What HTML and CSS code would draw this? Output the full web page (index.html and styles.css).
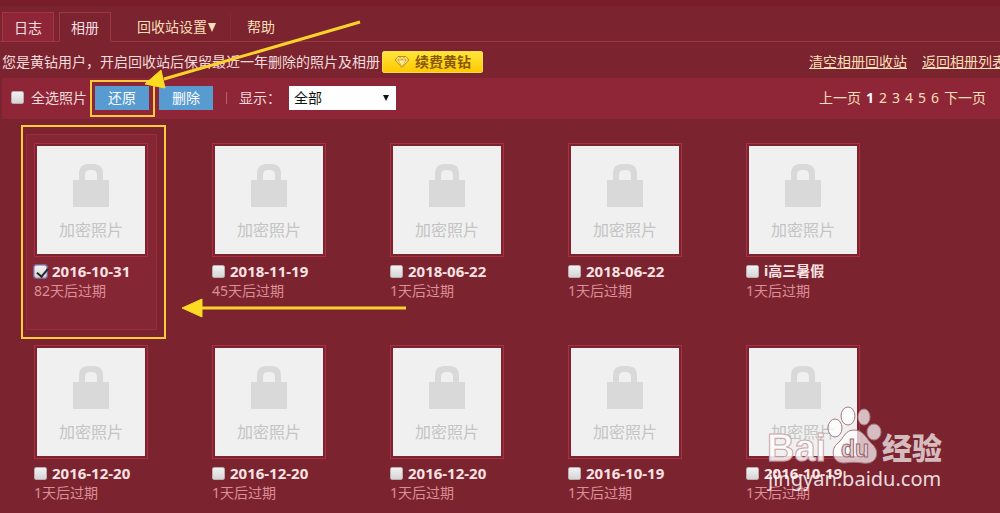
FILE: index.html
```html
<!DOCTYPE html>
<html lang="zh-CN">
<head>
<meta charset="utf-8">
<title>相册回收站</title>
<link rel="stylesheet" href="styles.css">
</head>
<body>
<svg class="defs" width="0" height="0" aria-hidden="true">
  <symbol id="lock" viewBox="0 0 36 43"><path fill="#d9d9d9" d="M0 16h6V10Q6 0 15 0h6q9 0 9 10v6h6v27H0zM12 16h12v-5q0-5-5-5h-2q-5 0-5 5z"/></symbol>
</svg>
<nav class="tabs">
  <a class="tab" href="#log">日志</a>
  <a class="tab tab-active" href="#album">相册</a>
  <a class="menu-link menu-settings" href="#settings">回收站设置<svg class="caret" width="8" height="9" viewBox="0 0 8 9" aria-hidden="true"><path d="M0 0h8L4 9z" fill="#f9dfb5"/></svg></a>
  <a class="menu-link" href="#help">帮助</a>
</nav>
<div class="notice">
  <span class="notice-text">您是黄钻用户，开启回收站后保留最近一年删除的照片及相册</span>
  <button class="renew" type="button">
    <svg width="16" height="14" viewBox="0 0 16 14" aria-hidden="true"><path d="M4 1.500h8l3 3.500-7 7.500L1 5z" fill="#fff0a0" stroke="#c98a10"/><path d="M1 5h14M4 5l4 7 4-7M4 5l2-3 2 3 2-3 2 3" fill="none" stroke="#d59a1c" stroke-width=".8"/></svg>
    续费黄钻
  </button>
  <span class="notice-links"><a href="#clear">清空相册回收站</a><a href="#back">返回相册列表</a></span>
</div>
<div class="toolbar">
  <label class="select-all"><input class="check" type="checkbox"> 全选照片</label>
  <div class="actions">
    <span class="marked"><button class="action" type="button">还原</button></span>
    <button class="action" type="button">删除</button>
  </div>
  <label class="filter"><span class="filter-label">显示：</span>
    <span class="select-wrap"><select class="select"><option>全部</option></select></span>
  </label>
  <div class="pager"><a href="#prev">上一页</a><b>1</b><a href="#p2">2</a><a href="#p3">3</a><a href="#p4">4</a><a href="#p5">5</a><a href="#p6">6</a><a href="#next">下一页</a></div>
</div>
<main class="albums">
  <article class="album album-selected">
    <div class="cover"><svg class="lock"><use href="#lock"/></svg><span>加密照片</span></div>
    <label class="name"><input class="check" type="checkbox" checked>2016-10-31</label>
    <p class="expiry">82天后过期</p>
  </article>
  <article class="album">
    <div class="cover"><svg class="lock"><use href="#lock"/></svg><span>加密照片</span></div>
    <label class="name"><input class="check" type="checkbox">2018-11-19</label>
    <p class="expiry">45天后过期</p>
  </article>
  <article class="album">
    <div class="cover"><svg class="lock"><use href="#lock"/></svg><span>加密照片</span></div>
    <label class="name"><input class="check" type="checkbox">2018-06-22</label>
    <p class="expiry">1天后过期</p>
  </article>
  <article class="album">
    <div class="cover"><svg class="lock"><use href="#lock"/></svg><span>加密照片</span></div>
    <label class="name"><input class="check" type="checkbox">2018-06-22</label>
    <p class="expiry">1天后过期</p>
  </article>
  <article class="album">
    <div class="cover"><svg class="lock"><use href="#lock"/></svg><span>加密照片</span></div>
    <label class="name name-text"><input class="check" type="checkbox">i高三暑假</label>
    <p class="expiry">1天后过期</p>
  </article>
  <article class="album">
    <div class="cover"><svg class="lock"><use href="#lock"/></svg><span>加密照片</span></div>
    <label class="name"><input class="check" type="checkbox">2016-12-20</label>
    <p class="expiry">1天后过期</p>
  </article>
  <article class="album">
    <div class="cover"><svg class="lock"><use href="#lock"/></svg><span>加密照片</span></div>
    <label class="name"><input class="check" type="checkbox">2016-12-20</label>
    <p class="expiry">1天后过期</p>
  </article>
  <article class="album">
    <div class="cover"><svg class="lock"><use href="#lock"/></svg><span>加密照片</span></div>
    <label class="name"><input class="check" type="checkbox">2016-12-20</label>
    <p class="expiry">1天后过期</p>
  </article>
  <article class="album">
    <div class="cover"><svg class="lock"><use href="#lock"/></svg><span>加密照片</span></div>
    <label class="name"><input class="check" type="checkbox">2016-10-19</label>
    <p class="expiry">1天后过期</p>
  </article>
  <article class="album">
    <div class="cover"><svg class="lock"><use href="#lock"/></svg><span>加密照片</span></div>
    <label class="name"><input class="check" type="checkbox">2016-10-19</label>
    <p class="expiry">1天后过期</p>
  </article>
</main>
<svg class="overlay" width="1000" height="513" viewBox="0 0 1000 513">
  <g fill="#fbdc20" stroke="#fbd22c">
    <path d="M360 22 164 79" stroke-width="3"/>
    <path d="M145 84l16-14 4 18z"/>
    <path d="M406 308H200" stroke-width="3"/>
    <path d="M182 308l20-9v18z"/>
  </g>
  <g class="watermark">
    <text class="wm-brand" x="767" y="461">Bai</text>
    <g stroke="#a67b82" stroke-width="1">
      <ellipse cx="835" cy="428" rx="7" ry="9"/>
      <ellipse cx="848" cy="416" rx="7" ry="9"/>
      <ellipse cx="864" cy="417" rx="6" ry="8"/>
      <ellipse cx="874" cy="432" rx="7" ry="8"/>
      <path d="M854 430c-9 0-10 8-16 13-8 6-6 20 6 20 7-1 13-1 19 0 14 2 17-11 10-18-7-6-9-15-19-15z"/>
    </g>
    <text class="wm-du" x="841" y="457">du</text>
    <text class="wm-cn" x="882" y="459">经验</text>
    <text class="wm-url" x="768" y="486">jingyan.baidu.com</text>
  </g>
</svg>
</body>
</html>
```
FILE: styles.css
```css
* { box-sizing: border-box; }
body {
  margin: 0;
  min-height: 100vh;
  position: relative;
  overflow-x: hidden;
  background: #7b2430;
  border-top: 6px solid #781d2a;
  color: #f5dcdc;
  font: 14px/20px "Noto Sans", "Noto Sans CJK SC", sans-serif;
}
.defs { position: absolute; }
button, select, input { font: inherit; margin: 0; }
a { color: #f9dfb5; text-decoration: none; }

.tabs {
  display: flex;
  align-items: flex-end;
  height: 36px;
  padding-left: 2px;
  box-shadow: inset 0 -1px #9c3840;
}
.tab {
  width: 52px;
  height: 30px;
  margin-right: 5px;
  border: 1px solid #a13543;
  background: #8f2638;
  color: #f8dfe0;
  line-height: 30px;
  text-align: center;
}
.tab-active { background: #7b2430; border-bottom-color: #7b2430; }
.menu-link { padding: 0 16px; line-height: 30px; }
.menu-settings { margin-left: 5px; padding-right: 14px; border-right: 1px solid #8b2735; }
.caret { margin-left: 1px; }

.notice {
  display: flex;
  align-items: center;
  height: 36px;
  padding: 3px 0 0 2px;
  overflow: hidden;
  white-space: nowrap;
}
.renew {
  display: flex;
  align-items: center;
  justify-content: center;
  gap: 5px;
  width: 101px;
  height: 22px;
  margin-left: 2px;
  padding: 0;
  border: 1px solid #f8d95c;
  border-radius: 2px;
  background: linear-gradient(#ffe63b, #fdc900);
  color: #8a5700;
  font-weight: bold;
  line-height: 20px;
}
.notice-links { display: flex; gap: 15px; margin: 0 -6px 0 auto; }
.notice-links a { text-decoration: underline; }

.toolbar {
  display: flex;
  align-items: center;
  height: 41px;
  margin-left: 2px;
  padding: 0 14px 2px 9px;
  background: #8f2638;
}
.check {
  appearance: none;
  width: 13px;
  height: 13px;
  flex: none;
  border: 1px solid #b9adb0;
  border-radius: 2px;
  background: linear-gradient(#f2f2f2, #d5d5d5);
}
.check:checked { position: relative; outline: 1px solid #7763a8; }
.check:checked::after {
  content: "";
  position: absolute;
  left: 4px;
  top: 0;
  width: 5px;
  height: 9px;
  border: solid #26262c;
  border-width: 0 2px 2px 0;
  transform: rotate(40deg);
}
.select-all { display: flex; align-items: center; gap: 7px; }
.actions { display: flex; gap: 10px; margin-left: 8px; }
.marked { position: relative; }
.marked::after {
  content: "";
  position: absolute;
  inset: -6px -6px -7px -5px;
  border: 2px solid #fbcb3c;
  pointer-events: none;
}
.action {
  width: 54px;
  height: 24px;
  padding: 0;
  border: 0;
  background: #589bd0;
  color: #fff;
}
.marked, .action { display: block; }
.filter { display: flex; align-items: center; margin-left: 13px; }
.filter-label { padding-left: 13px; position: relative; }
.filter-label::before {
  content: "";
  position: absolute;
  left: 0;
  top: 4px;
  height: 12px;
  border-left: 1px solid #b4606d;
}
.select-wrap { position: relative; margin-left: 8px; }
.select-wrap::after {
  content: "";
  position: absolute;
  right: 7px;
  top: 9px;
  border: solid transparent;
  border-width: 6px 3px 0;
  border-top-color: #111;
}
.select {
  appearance: none;
  display: block;
  width: 107px;
  height: 24px;
  padding: 0 5px;
  border: 0;
  border-radius: 0;
  background: #fff;
  color: #111;
}
.pager { display: flex; gap: 5px; margin-left: auto; color: #fff; }

.albums {
  display: grid;
  grid-template-columns: repeat(auto-fill, 131px);
  gap: 6px 47px;
  padding: 15px 0 8px 26px;
}
.album { padding: 8px 8px 8px 7px; border: 1px solid transparent; position: relative; }
.album-selected { min-height: 196px; background: #852635; border-color: #9b2b3c; }
.album-selected::after {
  content: "";
  position: absolute;
  inset: -10px -10px -10px -6px;
  border: 2px solid #fbcb3c;
  pointer-events: none;
}
.cover {
  display: flex;
  flex-direction: column;
  align-items: center;
  gap: 13px;
  width: 114px;
  height: 114px;
  padding-top: 20px;
  border: 1px solid #ab2f42;
  background: #f0f0f0;
  box-shadow: inset 0 0 0 2px #7b2430;
  color: #c4c4c4;
  font-size: 16px;
}
.lock { width: 36px; height: 43px; flex: none; }
.name {
  display: flex;
  align-items: center;
  gap: 5px;
  margin-top: 4px;
  color: #fbe3e3;
  font-size: 15px;
  font-weight: bold;
}
.name-text { font-size: 14px; }
.expiry { margin: 0; color: #dc8f96; }

.overlay { position: absolute; left: 0; top: -6px; pointer-events: none; }
.watermark { fill: #fff; fill-opacity: .7; }
.wm-brand { font: bold 38px "Liberation Sans", sans-serif; stroke: #c9a5aa; stroke-width: 1px; fill-opacity: .85; }
.wm-du { font: bold 23px "Liberation Sans", sans-serif; fill: #e8d5d8; fill-opacity: 1; stroke: #986771; stroke-width: 1px; }
.wm-cn { font: 900 30px "Noto Sans CJK SC", sans-serif; }
.wm-url { font: 20px "Noto Sans", sans-serif; fill-opacity: .85; }
```
